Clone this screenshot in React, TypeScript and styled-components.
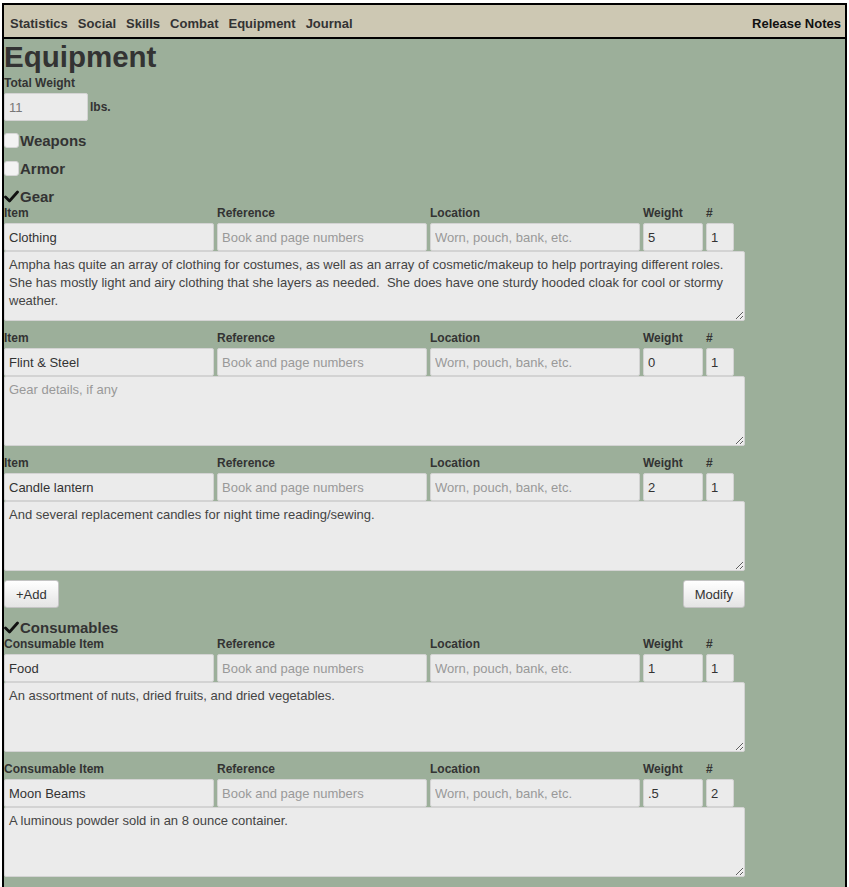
import React from "react";
import styled, { createGlobalStyle } from "styled-components";

const Global = createGlobalStyle`
  html, body { margin: 0; padding: 0; background: #fff; }
  body { font-family: "Liberation Sans", Arial, sans-serif; }
  * { box-sizing: border-box; }
`;

const Page = styled.div`
  margin: 3px 2px 3px 2px;
  border-left: 2px solid #000;
  border-right: 2px solid #000;
  background: #9caf9a;
  min-height: 900px;
  color: #333;
`;

const Nav = styled.nav`
  display: flex;
  align-items: center;
  justify-content: space-between;
  background: #cdc8b3;
  border-top: 2px solid #000;
  border-bottom: 2px solid #000;
  padding: 11px 4px 6px 6px;
  line-height: 15px;
  font-size: 13px;
  font-weight: bold;
`;

const NavLinks = styled.div`
  display: flex;
  gap: 10px;
`;

const NavLink = styled.a<{ $dark?: boolean }>`
  color: ${(p) => (p.$dark ? "#111" : "#333")};
  text-decoration: none;
`;

const Title = styled.h1`
  margin: 0;
  font-size: 29.5px;
  line-height: 36px;
  font-weight: bold;
  color: #333;
`;

const Content = styled.div`
  padding: 0 0 20px 0;
`;

const SmallLabel = styled.div`
  font-size: 12px;
  font-weight: bold;
  line-height: 16px;
  color: #333;
`;

const WeightRow = styled.div`
  display: flex;
  align-items: center;
  gap: 2px;
  margin-top: 2px;
`;

const Field = styled.input<{ $w: number }>`
  width: ${(p) => p.$w}px;
  height: 28px;
  background: #ebebeb;
  border: 1px solid #d3d3d3;
  border-radius: 2px;
  padding: 0 4px;
  font-family: "Liberation Sans", Arial, sans-serif;
  font-size: 13px;
  color: #333;
  outline: none;
  &::placeholder { color: #999; }
  &:disabled { color: #777; }
`;

const Unit = styled.span`
  font-size: 12px;
  font-weight: bold;
`;

const CategoryRow = styled.label<{ $top?: number }>`
  display: flex;
  align-items: center;
  margin-top: ${(p) => p.$top ?? 6}px;
  height: 22px;
  font-size: 15px;
  font-weight: bold;
  color: #333;
`;

const Box = styled.span<{ $checked?: boolean }>`
  display: inline-flex;
  align-items: center;
  justify-content: center;
  width: 15px;
  height: 15px;
  margin-right: 1px;
  border-radius: 3px;
  background: ${(p) => (p.$checked ? "transparent" : "#f3f3f3")};
  border: ${(p) => (p.$checked ? "none" : "1px solid #d6d6d6")};
`;

const Block = styled.div`
  margin-bottom: 11px;
`;

const HeaderRow = styled.div`
  display: flex;
  gap: 3px;
  height: 12px;
  align-items: center;
`;

const ColLabel = styled.div<{ $w: number }>`
  width: ${(p) => p.$w}px;
  font-size: 12px;
  font-weight: bold;
  color: #333;
  white-space: nowrap;
`;

const InputRow = styled.div`
  display: flex;
  gap: 3px;
  margin-top: 4px;
`;

const Notes = styled.textarea`
  display: block;
  width: 741px;
  height: 70px;
  margin: 0;
  background: #ebebeb;
  border: 1px solid #d3d3d3;
  border-radius: 2px;
  padding: 4px 4px;
  font-family: "Liberation Sans", Arial, sans-serif;
  font-size: 13px;
  line-height: 18px;
  color: #444;
  outline: none;
  &::placeholder { color: #999; }
`;

const ButtonRow = styled.div`
  display: flex;
  justify-content: space-between;
  width: 741px;
  margin-top: -2px;
`;

const Button = styled.button`
  height: 28px;
  padding: 0 11px;
  font-family: "Liberation Sans", Arial, sans-serif;
  font-size: 13px;
  color: #333;
  background: linear-gradient(#ffffff, #e4e4e4);
  border: 1px solid #c4c4c4;
  border-radius: 3px;
`;

const Check = () => (
  <svg width="15" height="13" viewBox="0 0 15 13">
    <path d="M1.5 7 L5.5 11 L13.5 2" fill="none" stroke="#111" strokeWidth="2.8" strokeLinecap="round" strokeLinejoin="round" />
  </svg>
);

type Item = { name: string; weight: string; qty: string; notes: string };

const gear: Item[] = [
  {
    name: "Clothing",
    weight: "5",
    qty: "1",
    notes:
      "Ampha has quite an array of clothing for costumes, as well as an array of cosmetic/makeup to help portraying different roles.  She has mostly light and airy clothing that she layers as needed.  She does have one sturdy hooded cloak for cool or stormy weather.",
  },
  { name: "Flint & Steel", weight: "0", qty: "1", notes: "" },
  { name: "Candle lantern", weight: "2", qty: "1", notes: "And several replacement candles for night time reading/sewing." },
];

const consumables: Item[] = [
  { name: "Food", weight: "1", qty: "1", notes: "An assortment of nuts, dried fruits, and dried vegetables." },
  { name: "Moon Beams", weight: ".5", qty: "2", notes: "A luminous powder sold in an 8 ounce container." },
];

const ItemBlock = ({ item, label }: { item: Item; label: string }) => (
  <Block>
    <HeaderRow>
      <ColLabel $w={210}>{label}</ColLabel>
      <ColLabel $w={210}>Reference</ColLabel>
      <ColLabel $w={210}>Location</ColLabel>
      <ColLabel $w={60}>Weight</ColLabel>
      <ColLabel $w={28}>#</ColLabel>
    </HeaderRow>
    <InputRow>
      <Field $w={210} defaultValue={item.name} />
      <Field $w={210} placeholder="Book and page numbers" />
      <Field $w={210} placeholder="Worn, pouch, bank, etc." />
      <Field $w={60} defaultValue={item.weight} />
      <Field $w={28} defaultValue={item.qty} />
    </InputRow>
    <Notes defaultValue={item.notes} placeholder="Gear details, if any" />
  </Block>
);

export default function App() {
  return (
    <>
      <Global />
      <Page>
        <Nav>
          <NavLinks>
            <NavLink>Statistics</NavLink>
            <NavLink>Social</NavLink>
            <NavLink>Skills</NavLink>
            <NavLink>Combat</NavLink>
            <NavLink>Equipment</NavLink>
            <NavLink>Journal</NavLink>
          </NavLinks>
          <NavLink $dark>Release Notes</NavLink>
        </Nav>
        <Content>
          <Title>Equipment</Title>
          <SmallLabel>Total Weight</SmallLabel>
          <WeightRow>
            <Field $w={84} defaultValue="11" disabled />
            <Unit>lbs.</Unit>
          </WeightRow>
          <CategoryRow $top={8}>
            <Box />
            Weapons
          </CategoryRow>
          <CategoryRow>
            <Box />
            Armor
          </CategoryRow>
          <CategoryRow>
            <Box $checked>
              <Check />
            </Box>
            Gear
          </CategoryRow>
          {gear.map((g) => (
            <ItemBlock key={g.name} item={g} label="Item" />
          ))}
          <ButtonRow>
            <Button>+Add</Button>
            <Button>Modify</Button>
          </ButtonRow>
          <CategoryRow $top={8}>
            <Box $checked>
              <Check />
            </Box>
            Consumables
          </CategoryRow>
          {consumables.map((g) => (
            <ItemBlock key={g.name} item={g} label="Consumable Item" />
          ))}
        </Content>
      </Page>
    </>
  );
}
